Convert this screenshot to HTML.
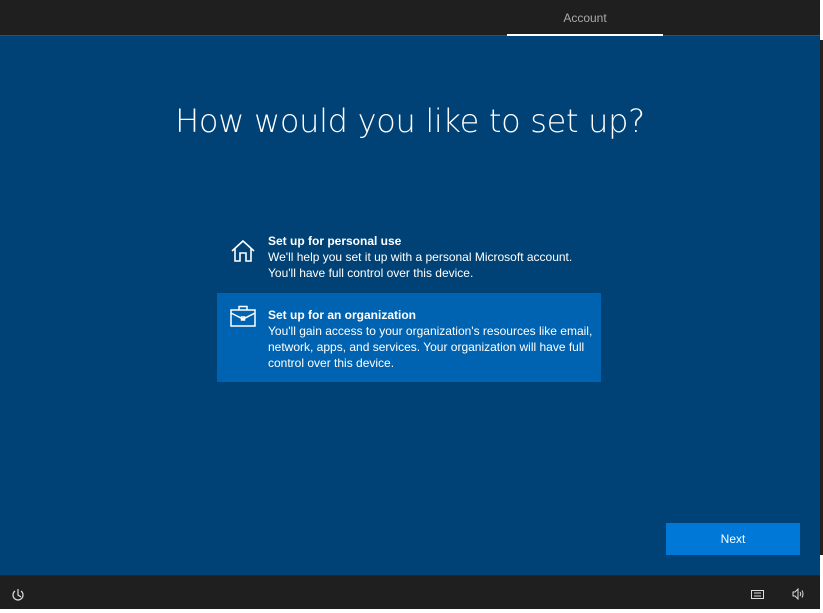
<!DOCTYPE html>
<html><head><style>
*{margin:0;padding:0;box-sizing:border-box}
body{width:823px;height:613px;background:#fff;font-family:"Liberation Sans",sans-serif;position:relative;overflow:hidden}
.top{position:absolute;left:0;top:0;width:820px;height:36px;background:#1f1f1f;border-bottom:1px solid #4a4a4a}
.acc{position:absolute;left:507px;top:0;width:156px;height:36px;color:#aaa;font-size:12px;text-align:center;line-height:36px;border-bottom:2px solid #fff}
.main{position:absolute;left:0;top:36px;width:820px;height:539px;background:#004275}
.right{position:absolute;left:820px;top:0;width:3px;height:613px;background:#fff}
.right div{position:absolute;left:0;top:40px;width:3px;height:515px;background:#222}
h1{position:absolute;left:0;width:820px;top:102px;text-align:center;color:#fff;font-size:32px;font-family:"DejaVu Sans","Liberation Sans",sans-serif;font-weight:200;letter-spacing:-0.3px}
.opt{position:absolute;left:217px;width:384px;color:#fff;font-size:12px;line-height:16px;padding-left:51px}
.opt b{font-weight:bold;display:block}
.opt svg{position:absolute;left:13px;top:6px}
.sel{background:#0063b1}
.next{position:absolute;left:666px;top:523px;width:134px;height:32px;background:#0078d7;color:#fff;font-size:12px;text-align:center;line-height:32px}
.bot{position:absolute;left:0;top:575px;width:820px;height:34px;background:#1f1f1f;border-top:1px solid #0a2c4a}
</style></head><body>
<div class="top"><div class="acc">Account</div></div>
<div class="main"></div>
<h1>How would you like to set up?</h1>
<div class="opt" style="top:233px;height:58px">
<svg width="26" height="24" viewBox="0 0 26 24" fill="none" stroke="#fff" stroke-width="1.6"><path d="M2 12 L13 2 L24 12 M5 9.5 V22 H10 V14 H16 V22 H21 V9.5"/></svg>
<b>Set up for personal use</b>We'll help you set it up with a personal Microsoft account.<br>You'll have full control over this device.</div>
<div class="opt sel" style="top:293px;height:89px;padding-top:14px">
<svg width="26" height="22" viewBox="0 0 26 22" fill="none" stroke="#fff" stroke-width="1.5" style="top:12px"><rect x="1" y="5" width="24" height="16"/><path d="M9 5 V1.5 H17 V5 M1 8 L13 14 L25 8"/><rect x="11.5" y="12" width="3" height="3"/></svg>
<b>Set up for an organization</b>You'll gain access to your organization's resources like email,<br>network, apps, and services. Your organization will have full<br>control over this device.</div>
<div class="next">Next</div>
<div class="bot">
<svg style="position:absolute;left:11px;top:12px" width="14" height="14" viewBox="0 0 14 14" fill="none" stroke="#ddd" stroke-width="1.2"><path d="M4 3 A5 5 0 1 0 10 3 M7 1 V7 L10 9"/></svg>
<svg style="position:absolute;left:751px;top:14px" width="13" height="9" viewBox="0 0 13 9" fill="none" stroke="#ddd"><rect x="0.5" y="0.5" width="12" height="8"/><path d="M3 6 H10 M3 3 H10"/></svg>
<svg style="position:absolute;left:792px;top:12px" width="12" height="12" viewBox="0 0 12 12" fill="none" stroke="#ddd"><path d="M1 4 H3 L6 1 V11 L3 8 H1Z M8 4 Q9.5 6 8 8 M10 2.5 Q12 6 10 9.5"/></svg>
</div>
<div class="right"><div></div></div>
</body></html>
